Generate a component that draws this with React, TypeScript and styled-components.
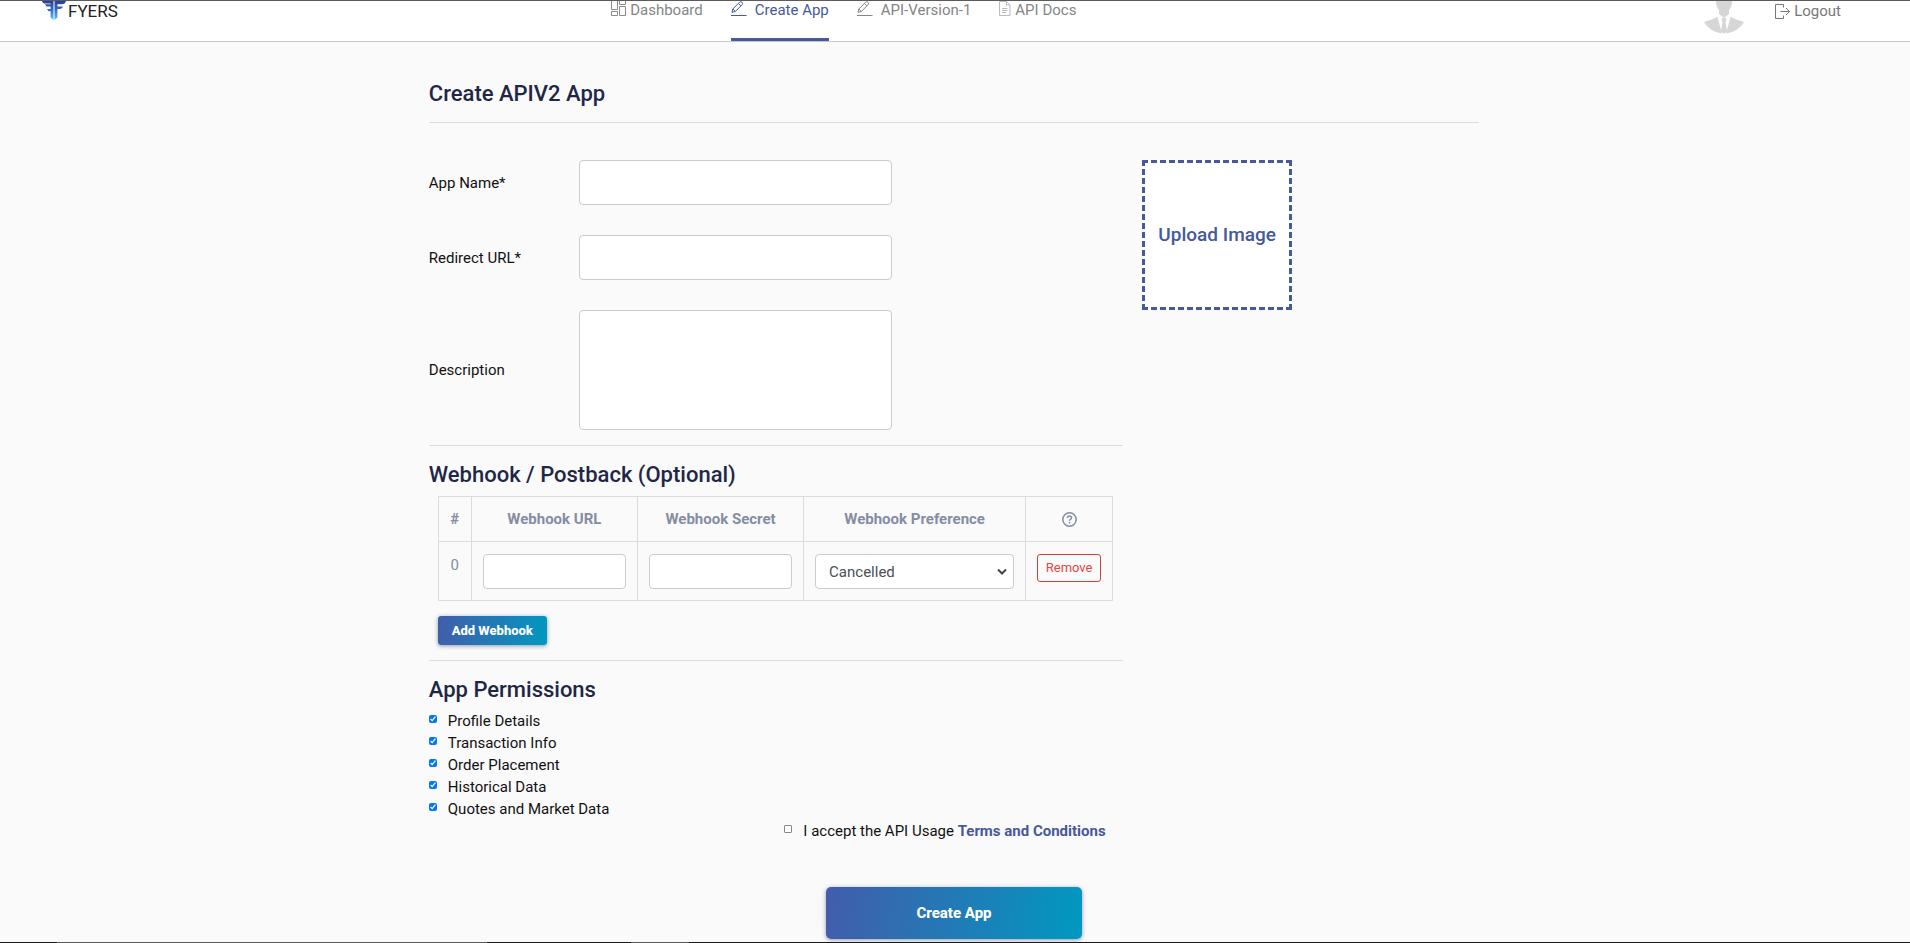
import React from "react";
import styled, { createGlobalStyle, css } from "styled-components";

const GlobalStyle = createGlobalStyle`
  *, *::before, *::after { box-sizing: border-box; }
  body {
    margin: 0;
    background: #fafafa;
    color: #111;
    font: 400 15px/22px Roboto, "Liberation Sans", sans-serif;
  }
  button, input, select, textarea { font: inherit; margin: 0; }
  h1, h2, ul { margin: 0; padding: 0; }
`;

const Page = styled.div`
  border-top: 1px solid #5c5a5c;
`;

const Header = styled.header`
  display: grid;
  grid-template-columns: 32vw 1fr auto;
  height: 41px;
  padding-right: 69px;
  background: #fff;
  border-bottom: 1px solid #c8c8c8;
`;

const Brand = styled.a`
  display: flex;
  align-items: flex-start;
  gap: 2px;
  padding-left: 42px;
  color: #222;
  font-size: 17px;
  line-height: 20px;
  text-decoration: none;
`;

const Nav = styled.nav`
  display: flex;
  gap: 28px;
`;

const NavLink = styled.a<{ $active?: boolean; $gap?: number }>`
  display: flex;
  align-items: flex-start;
  gap: ${(p) => p.$gap ?? 4}px;
  height: 40px;
  border-bottom: 3px solid ${(p) => (p.$active ? "#46599b" : "transparent")};
  color: ${(p) => (p.$active ? "#46599b" : "#858585")};
  line-height: 18px;
  text-decoration: none;
  white-space: nowrap;
`;

const Account = styled.div`
  display: flex;
  align-items: flex-start;
  gap: 31px;
`;

const Logout = styled.a`
  display: flex;
  gap: 3px;
  color: #777;
  line-height: 20px;
  text-decoration: none;
`;

const Main = styled.main`
  width: 55.1%;
  min-width: 900px;
  margin: 0 auto;
  padding: 39px 2px 3px 0;
`;

const headingText = css`
  color: #1f2747;
  font-size: 22px;
  font-weight: 500;
  line-height: 26px;
`;

const PageTitle = styled.h1`
  ${headingText}
  padding-bottom: 15px;
  border-bottom: 1px solid #dcdcdc;
`;

const Heading = styled.h2`
  ${headingText}
`;

const Columns = styled.div`
  display: grid;
  grid-template-columns: 66.1% 1fr;
  gap: 19px;
  padding-top: 37px;
`;

const Fields = styled.div`
  display: flex;
  flex-direction: column;
  gap: 30px;
  padding-bottom: 15px;
`;

const Field = styled.label`
  display: grid;
  grid-template-columns: 150px 313px;
  align-items: center;
`;

const control = css`
  display: block;
  width: 100%;
  background: #fff;
  border: 1px solid #ccc;
  border-radius: 4px;
  color: #495057;
`;

const TextBox = styled.input<{ $small?: boolean }>`
  ${control}
  height: ${(p) => (p.$small ? 35 : 45)}px;
  padding: 0 12px;
`;

const TextArea = styled.textarea`
  ${control}
  height: 120px;
  padding: 12px;
  resize: none;
`;

const Section = styled.section`
  padding: 16px 0 15px;
  border-top: 1px solid #dcdcdc;
`;

const WebhookArea = styled.div`
  padding: 8px 10px 0 9px;
`;

const Table = styled.table`
  width: 100%;
  border-collapse: collapse;
  table-layout: fixed;
  color: #858da3;
  text-align: center;
`;

const Column = styled.col<{ $width?: number }>`
  width: ${(p) => (p.$width ? `${p.$width}px` : "auto")};
`;

const Cell = styled.td`
  padding: 12px 11px 11px;
  border: 1px solid #dcdcdc;
  vertical-align: top;
`;

const HeadCell = styled.th`
  height: 45px;
  padding: 0;
  border: 1px solid #dcdcdc;
  font-weight: 700;
  vertical-align: middle;
  svg { display: block; margin: 0 auto; }
`;

const SelectWrap = styled.div`
  position: relative;
  svg { position: absolute; right: 7px; top: 14px; pointer-events: none; }
`;

const Select = styled.select`
  ${control}
  height: 35px;
  padding: 0 12px 0 13px;
  appearance: none;
`;

const RemoveButton = styled.button`
  width: 100%;
  height: 28px;
  padding: 0;
  background: transparent;
  border: 1px solid #d5403f;
  border-radius: 3px;
  color: #e04848;
  font-size: 13px;
`;

const PrimaryButton = styled.button<{ $large?: boolean }>`
  display: block;
  width: ${(p) => (p.$large ? 256 : 109)}px;
  height: ${(p) => (p.$large ? 52 : 29)}px;
  margin: ${(p) => (p.$large ? "45px auto 0" : "15px 0 0")};
  padding: 0;
  background: linear-gradient(100deg, #435cab, #0099c0);
  border: 0;
  border-radius: ${(p) => (p.$large ? 5 : 3)}px;
  box-shadow: 0 1px 4px rgba(40, 60, 90, 0.5);
  color: #fff;
  font-size: ${(p) => (p.$large ? 15 : 13)}px;
  font-weight: 800;
`;

const UploadButton = styled.button`
  width: 150px;
  height: 150px;
  padding: 0;
  background: #fff;
  border: 3px dashed #46599b;
  color: #46599b;
  font-size: 19px;
  font-weight: 500;
`;

const Permissions = styled.ul`
  padding-top: 7px;
  list-style: none;
`;

const Check = styled.label`
  display: flex;
  align-items: flex-start;
  gap: 11px;
  input { width: 8px; height: 8px; margin-top: 5px; }
  input:not(:checked) {
    appearance: none;
    background: #fff;
    border: 1px solid #888;
    border-radius: 1px;
  }
`;

const Acceptance = styled.div`
  display: flex;
  justify-content: center;
  margin-top: -15px;
  padding-right: 18px;
`;

const TermsLink = styled.a`
  color: #46599b;
  font-weight: 700;
  text-decoration: none;
`;

const WindowEdge = styled.div`
  height: 1px;
  background: linear-gradient(90deg, #1a1718 57px, #5c5a5c 57px 487px, #1a1718 487px 631px, #5c5a5c 631px 689px, #1a1718 689px);
`;

const LogoMark = () => (
  <svg width="24" height="20" viewBox="0 0 24 20" aria-hidden="true">
    <defs>
      <linearGradient id="wing" gradientUnits="userSpaceOnUse" x1="0" y1="0" x2="0" y2="19">
        <stop offset="0" stopColor="#2b3c96" />
        <stop offset=".5" stopColor="#3370cf" />
        <stop offset="1" stopColor="#62c6fa" />
      </linearGradient>
    </defs>
    <path
      fill="url(#wing)"
      d="M0 0h24q-1 3.300-4 3.300h-4.600V5.400H21q-1 2.500-3.500 2.500h-2.100V16.600L12.500 19V0H11.500V19L8.600 16.600V10.300H6.500L5 7.900H8.600V5.400H4.500L3 3.300H8.600V2.500H2Q.6 2 0 0Z"
    />
  </svg>
);

const DashboardIcon = () => (
  <svg width="15" height="16" viewBox="0 0 15 16" fill="none" stroke="#8b8b88" aria-hidden="true">
    <path d="M.5 0v8.500h6V0M.5 10.500h6v4h-6ZM8.500 0v3.500h6V0M8.500 5.500h6v9h-6Z" />
  </svg>
);

const PencilIcon = () => (
  <svg width="16" height="16" viewBox="0 0 16 16" fill="none" stroke="currentColor" aria-hidden="true">
    <path d="M1 11.300 1.800 8 8.600 1.200q1.200-1 2.400.1t.1 2.400L4.300 10.500ZM7.400 2.400l2.500 2.500M1.800 8l2.500 2.500M0 14.500h15.500" />
  </svg>
);

const DocIcon = () => (
  <svg width="12" height="16" viewBox="0 0 12 16" fill="none" stroke="#bbb" aria-hidden="true">
    <path d="M.5.5h7l3.500 3.500v10.500H.5ZM7.500.5V4H11M3 7.500h5.500M3 9.500h5.500M3 11.500h4" />
  </svg>
);

const Avatar = () => (
  <svg width="40" height="33" viewBox="0 0 40 33" aria-hidden="true">
    <path fill="#d6d6d6" d="M12 0h16q0 6-3 9v4l-5 4-5-4V9q-3-3-3-9Z" />
    <path fill="#d6d6d6" d="M0 21q7-2 13.500-5l4.500 16.500Q6 31 0 21ZM40 21q-7-2-13.500-5L22 32.500Q34 31 40 21ZM18 17h4l.5 2-1 2 1.500 9-3 3-3-3 1.500-9-1-2Z" />
  </svg>
);

const LogoutIcon = () => (
  <svg width="16" height="20" viewBox="0 0 16 20" fill="none" stroke="#777" aria-hidden="true">
    <path d="M8.500 6.500v-3H.5v14h8v-3M5.500 10.500h9M11 7l3.500 3.500L11 14" />
  </svg>
);

const HelpIcon = () => (
  <svg width="15" height="15" viewBox="0 0 15 15" fill="none" stroke="#858da3" strokeWidth="1.500" role="img" aria-label="Help">
    <circle cx="7.500" cy="7.500" r="6.700" />
    <path d="M5.400 6q.1-2.100 2.100-2.100T9.600 5.700q0 1-1.100 1.600t-1 1.500M7.500 10v1.500" />
  </svg>
);

const Chevron = () => (
  <svg width="10" height="8" viewBox="0 0 10 8" fill="none" stroke="#3f464d" strokeWidth="2" aria-hidden="true">
    <path d="m1 1.500 4 4 4-4" />
  </svg>
);

const permissions = [
  "Profile Details",
  "Transaction Info",
  "Order Placement",
  "Historical Data",
  "Quotes and Market Data",
];

export default function App() {
  return (
    <Page>
      <GlobalStyle />
      <Header>
        <Brand href="#"><LogoMark />FYERS</Brand>
        <Nav>
          <NavLink href="#"><DashboardIcon />Dashboard</NavLink>
          <NavLink href="#" $active $gap={8}><PencilIcon />Create App</NavLink>
          <NavLink href="#" $gap={8}><PencilIcon />API-Version-1</NavLink>
          <NavLink href="#"><DocIcon />API Docs</NavLink>
        </Nav>
        <Account>
          <Avatar />
          <Logout href="#"><LogoutIcon />Logout</Logout>
        </Account>
      </Header>
      <Main>
        <PageTitle>Create APIV2 App</PageTitle>
        <Columns>
          <div>
            <Fields>
              <Field>App Name*<TextBox type="text" /></Field>
              <Field>Redirect URL*<TextBox type="text" /></Field>
              <Field>Description<TextArea /></Field>
            </Fields>
            <Section>
              <Heading>Webhook / Postback (Optional)</Heading>
              <WebhookArea>
                <Table>
                  <colgroup>
                    <Column $width={33} />
                    <Column />
                    <Column />
                    <Column $width={222} />
                    <Column $width={87} />
                  </colgroup>
                  <thead>
                    <tr>
                      <HeadCell>#</HeadCell>
                      <HeadCell>Webhook URL</HeadCell>
                      <HeadCell>Webhook Secret</HeadCell>
                      <HeadCell>Webhook Preference</HeadCell>
                      <HeadCell><HelpIcon /></HeadCell>
                    </tr>
                  </thead>
                  <tbody>
                    <tr>
                      <Cell>0</Cell>
                      <Cell><TextBox $small type="text" aria-label="Webhook URL" /></Cell>
                      <Cell><TextBox $small type="text" aria-label="Webhook Secret" /></Cell>
                      <Cell>
                        <SelectWrap>
                          <Select aria-label="Webhook Preference">
                            <option>Cancelled</option>
                          </Select>
                          <Chevron />
                        </SelectWrap>
                      </Cell>
                      <Cell><RemoveButton type="button">Remove</RemoveButton></Cell>
                    </tr>
                  </tbody>
                </Table>
                <PrimaryButton type="button">Add Webhook</PrimaryButton>
              </WebhookArea>
            </Section>
            <Section>
              <Heading>App Permissions</Heading>
              <Permissions>
                {permissions.map((name) => (
                  <li key={name}>
                    <Check><input type="checkbox" defaultChecked />{name}</Check>
                  </li>
                ))}
              </Permissions>
            </Section>
          </div>
          <div><UploadButton type="button">Upload Image</UploadButton></div>
        </Columns>
        <Acceptance>
          <Check>
            <input type="checkbox" />
            <span>I accept the API Usage <TermsLink href="#">Terms and Conditions</TermsLink></span>
          </Check>
        </Acceptance>
        <PrimaryButton type="submit" $large>Create App</PrimaryButton>
      </Main>
      <WindowEdge />
    </Page>
  );
}
